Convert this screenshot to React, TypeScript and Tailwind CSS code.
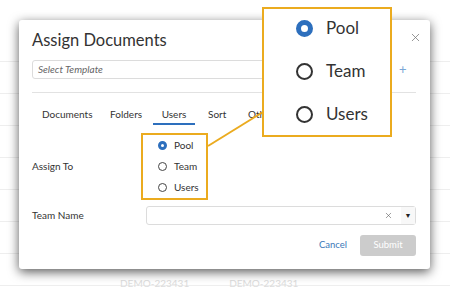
import { type FC } from 'react'
import { X } from 'lucide-react'

const font = { fontFamily: 'Lato, "Noto Sans", sans-serif' }

const Radio: FC<{ checked?: boolean; big?: boolean }> = ({ checked, big }) => {
  if (big) {
    return checked ? (
      <span className="block w-[17px] h-[17px] rounded-full border-[5px] border-[#2d6fbd] bg-white" />
    ) : (
      <span className="block w-[17px] h-[17px] rounded-full border-2 border-[#333] bg-white" />
    )
  }
  return checked ? (
    <span className="block w-[9px] h-[9px] rounded-full border-[3px] border-[#2d6fbd] bg-white" />
  ) : (
    <span className="block w-[9px] h-[9px] rounded-full border border-[#444] bg-white" />
  )
}

const options = ['Pool', 'Team', 'Users']

const App: FC = () => {
  return (
    <div className="relative w-[450px] h-[289px] bg-white overflow-hidden" style={font}>
      {/* page behind the dialog */}
      <div className="flex flex-col pt-[30px]">
        {Array.from({ length: 8 }).map((_, i) => (
          <div key={i} className="h-[32px] border-b border-[#eeeeee]" />
        ))}
        <div className="flex gap-[40px] pl-[120px] text-[10px] text-[#dddddd] -mt-[10px]">
          <span>DEMO-223431</span>
          <span>DEMO-223431</span>
        </div>
      </div>

      {/* dialog */}
      <div className="absolute left-[19px] top-[20px] w-[411px] h-[249px] bg-white rounded-[3px] shadow-[0_3px_11px_rgba(0,0,0,0.65)] px-[13px] pt-[9px]">
        <div className="flex items-center justify-between">
          <h1 className="text-[16.5px] leading-[22px] text-[#333]">Assign Documents</h1>
          <X size={13} strokeWidth={1.4} className="text-[#777] -mr-[5px] -mt-[5px]" />
        </div>

        <div className="flex items-center mt-[9px]">
          <div className="w-[357px] h-[19px] border border-[#dcdcdc] rounded-[3px] flex items-center px-[5px] text-[10px] italic text-[#666]">
            Select Template
          </div>
          <span className="ml-[10px] text-[13px] leading-none text-[#7aa6d6]">+</span>
        </div>

        <div className="h-px bg-[#e2e2e2] mt-[13px] w-[384px]" />

        <div className="flex text-[10px] text-[#333] mt-[14px] h-[18px] leading-[14px]">
          <span className="ml-[10px] w-[68px]">Documents</span>
          <span className="w-[43px]">Folders</span>
          <span className="w-[42px] text-center border-b-2 border-[#2d6fbd] h-[18px]">Users</span>
          <span className="ml-[13px] w-[40px]">Sort</span>
          <span>Other</span>
        </div>

        <div className="flex items-center mt-[8px]">
          <span className="w-[109px] text-[10px] text-[#333]">Assign To</span>
          <div className="w-[67px] h-[67px] border-2 border-[#ebab1f] flex flex-col justify-center gap-[8px] pl-[15px]">
            {options.map((o, i) => (
              <div key={o} className="flex items-center gap-[7px] h-[13px]">
                <Radio checked={i === 0} />
                <span className="text-[10px] text-[#333]">{o}</span>
              </div>
            ))}
          </div>
        </div>

        <div className="flex items-center mt-[6px]">
          <span className="w-[114px] text-[10px] text-[#333]">Team Name</span>
          <div className="w-[270px] h-[19px] border border-[#dcdcdc] rounded-[3px] flex items-center justify-end">
            <X size={9} strokeWidth={1.5} className="text-[#555] mr-[8px]" />
            <span className="w-[14px] h-[17px] bg-[#f8f8f8] flex items-center justify-center text-[7px] text-[#222]">▼</span>
          </div>
        </div>

        <div className="flex items-center justify-end mt-[10px] w-[384px]">
          <span className="text-[9.5px] text-[#3b78b8] mr-[13px]">Cancel</span>
          <div className="w-[56px] h-[21px] rounded-[3px] bg-[#cccccc] flex items-center justify-center text-[9.5px] text-white">
            Submit
          </div>
        </div>
      </div>

      {/* connector line */}
      <svg className="absolute left-0 top-0" width="450" height="289">
        <line x1="208" y1="146" x2="263" y2="112" stroke="#ebab1f" strokeWidth="2" />
      </svg>

      {/* magnified callout */}
      <div className="absolute left-[262px] top-[7px] w-[130px] h-[130px] bg-white border-2 border-[#ebab1f] flex flex-col justify-center gap-[23px] pl-[32px] pb-[2px]">
        {options.map((o, i) => (
          <div key={o} className="flex items-center gap-[13px] h-[20px]">
            <Radio checked={i === 0} big />
            <span className="text-[17px] text-[#333]">{o}</span>
          </div>
        ))}
      </div>
    </div>
  )
}

export default App
